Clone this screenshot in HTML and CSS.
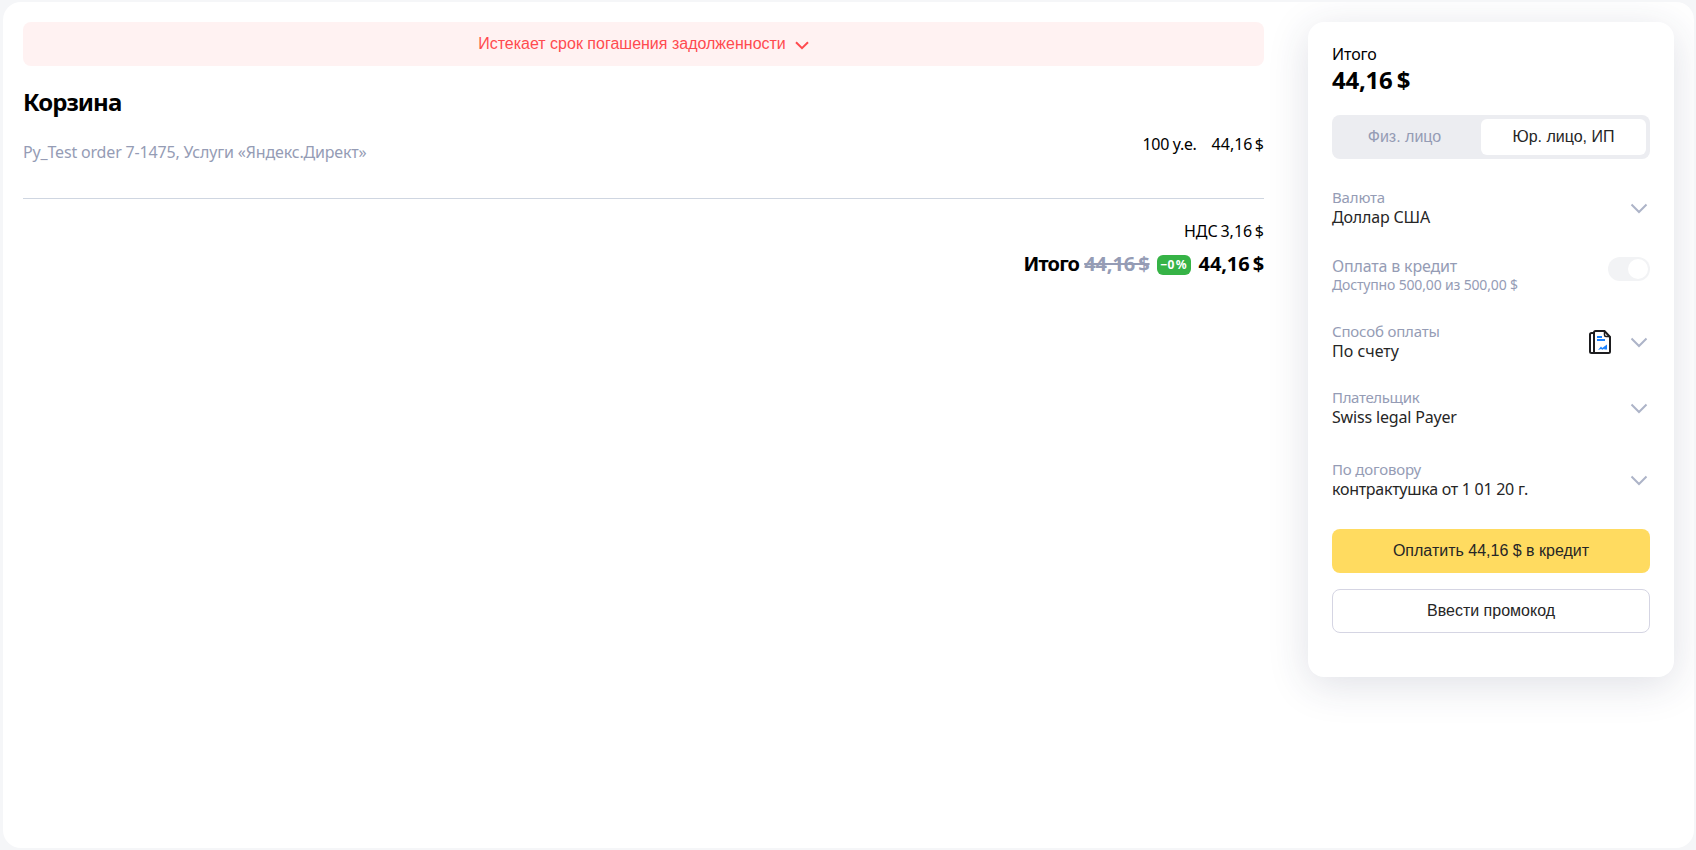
FILE: index.html
```html
<!DOCTYPE html>
<html lang="ru">
<head>
<meta charset="utf-8">
<title>Корзина</title>
<link rel="stylesheet" href="styles.css">
</head>
<body>
<div class="page">
  <main class="cart">
    <button class="alert"><span>Истекает срок погашения задолженности</span><svg width="14" height="9" viewBox="0 0 14 9"><path d="M1 1.2 7 7.2 13 1.2"/></svg></button>
    <h1 class="title">Корзина</h1>
    <div class="order">
      <div class="order-name">Py_Test order 7-1475, Услуги «Яндекс.Директ»</div>
      <div class="order-sum"><span class="quantity">100 у.е.</span><span class="amount">44,16 $</span></div>
    </div>
    <div class="vat">НДС 3,16 $</div>
    <div class="total">
      <span class="total-label">Итого</span><s class="total-price price-old">44,16 $</s><span class="badge">−0 %</span><span class="total-price">44,16 $</span>
    </div>
  </main>
  <aside class="card">
    <div class="card-label">Итого</div>
    <div class="card-sum">44,16 $</div>
    <div class="segmented">
      <div class="segment">Физ. лицо</div>
      <div class="segment segment-active">Юр. лицо, ИП</div>
    </div>
    <div class="field field-currency">
      <div><div class="label">Валюта</div><div class="value">Доллар США</div></div>
      <svg class="chevron" width="18" height="11" viewBox="0 0 18 11"><path d="M1.5 1.5 9 9 16.500 1.5"/></svg>
    </div>
    <div class="field field-credit">
      <div><div class="credit-label">Оплата в кредит</div><div class="credit-note">Доступно 500,00 из 500,00 $</div></div>
      <div class="toggle"><div class="knob"></div></div>
    </div>
    <div class="field field-method">
      <div><div class="label">Способ оплаты</div><div class="value value-short">По счету</div></div>
      <svg class="bill" width="22" height="24" viewBox="0 0 22 24">
        <path class="bill-line" d="M5 3H2.500Q1 3 1 4.500V21.500Q1 23 2.500 23H19.500Q21 23 21 21.500V7L15.500 1H6.500Q5 1 5 2.500V23"/>
        <path class="bill-fold" d="M15.500 1.500V5Q15.500 6.500 17 6.500H20.500"/>
        <path class="bill-text" d="M8 7H13M8 10H16"/>
        <path class="bill-sign" d="M9 20 12 16.500 13.200 18 18 14.500V19.500H15.500L15.200 18.700 13.500 19.800 12 19Z"/>
      </svg>
      <svg class="chevron" width="18" height="11" viewBox="0 0 18 11"><path d="M1.5 1.5 9 9 16.500 1.5"/></svg>
    </div>
    <div class="field field-payer">
      <div><div class="label label-payer">Плательщик</div><div class="value">Swiss legal Payer</div></div>
      <svg class="chevron" width="18" height="11" viewBox="0 0 18 11"><path d="M1.5 1.5 9 9 16.500 1.5"/></svg>
    </div>
    <div class="field field-contract">
      <div><div class="label">По договору</div><div class="value value-contract">контрактушка от 1 01 20 г.</div></div>
      <svg class="chevron" width="18" height="11" viewBox="0 0 18 11"><path d="M1.5 1.5 9 9 16.500 1.5"/></svg>
    </div>
    <button class="btn btn-pay">Оплатить 44,16 $ в кредит</button>
    <button class="btn btn-promo">Ввести промокод</button>
  </aside>
</div>
</body>
</html>
```
FILE: styles.css
```css
* { box-sizing: border-box; }
body { margin: 0; height: 850px; padding: 2px 2px 2px 3px; background: #f5f6f8; font: 16px/20px "Noto Sans", sans-serif; color: #000; overflow: hidden; white-space: nowrap; }
.page { display: flex; align-items: flex-start; justify-content: space-between; height: 846px; padding: 20px 20px 0 20px; border-radius: 18px; background: #fff; overflow: hidden; }
.cart { width: 1241px; }
button { font: 16px/20px "Liberation Sans", Arial, sans-serif; }
.alert { display: flex; align-items: center; justify-content: center; gap: 9px; width: 100%; height: 44px; padding: 0; border: 0; border-radius: 8px; background: #fff2f2; color: #ff4b4f; }
.alert svg { margin-top: 3px; fill: none; stroke: #ff4b4f; stroke-width: 2; }
.title { margin: 22px 0 0; font-size: 24px; line-height: 28px; font-weight: 700; letter-spacing: -.95px; }
.order { display: flex; justify-content: space-between; height: 83px; border-bottom: 1px solid #cfd6e1; }
.order-name { padding-top: 26px; color: #959cb5; letter-spacing: -.17px; }
.order-sum { display: flex; gap: 15px; padding-top: 18px; }
.quantity { letter-spacing: -.3px; }
.amount { word-spacing: -1.8px; }
.vat { margin-top: 22px; text-align: right; word-spacing: -1.5px; }
.total { display: flex; align-items: center; justify-content: flex-end; height: 28px; margin-top: 9px; font-size: 20px; line-height: 28px; font-weight: 700; }
.total-label { letter-spacing: -.85px; }
.total-price { letter-spacing: -.1px; word-spacing: -2px; }
.price-old { margin-left: 5px; color: #959cb5; }
.badge { width: 34px; height: 20px; margin: 2px 8px 0 7px; border-radius: 6px; background: #36b346; color: #fff; font-size: 12px; line-height: 20px; text-align: center; word-spacing: -1.8px; }
.card { width: 366px; height: 655px; padding: 22px 24px 0; border-radius: 16px; background: #fff; box-shadow: 0 8px 40px rgba(40, 50, 90, .15); }
.card-label { letter-spacing: -.1px; }
.card-sum { margin-top: 2px; font-size: 24px; line-height: 28px; font-weight: 700; letter-spacing: -.25px; word-spacing: -1.8px; }
.segmented { display: flex; height: 44px; margin-top: 21px; padding: 4px; border-radius: 8px; background: #ecedf1; font: 16px/36px "Liberation Sans", Arial, sans-serif; text-align: center; }
.segment { width: 145px; padding-right: 8px; color: #959cb5; }
.segment-active { width: 165px; padding: 0; border-radius: 6px; background: #fff; color: #262626; }
.field { display: flex; align-items: center; height: 40px; }
.field > div:first-child { flex: 1; }
.field-currency { margin-top: 28px; }
.field-credit { margin-top: 29px; height: 38px; }
.field-method { margin-top: 27px; }
.field-payer { margin-top: 26px; }
.field-contract { margin-top: 32px; }
.label { font-size: 15px; color: #959cb5; letter-spacing: -.17px; }
.label-payer { letter-spacing: -.35px; }
.value { color: #262626; letter-spacing: -.17px; }
.value-short { letter-spacing: 0; }
.value-contract { letter-spacing: -.27px; }
.credit-label { color: #959cb5; letter-spacing: -.18px; }
.credit-note { font-size: 14px; line-height: 18px; color: #959cb5; letter-spacing: -.16px; }
.chevron { margin: 2px 2px 0 0; fill: none; stroke: #adb4c8; stroke-width: 2; }
.toggle { display: flex; justify-content: flex-end; width: 42px; height: 24px; margin-bottom: 12px; padding: 2px; border-radius: 12px; background: #f2f3f5; }
.knob { width: 20px; height: 20px; border-radius: 50%; background: #fff; }
.bill { margin: 2px 19px 0 0; }
.bill-line, .bill-fold, .bill-text { fill: none; stroke: #1d1d1f; stroke-width: 2; }
.bill-fold { stroke-width: 1.5; }
.bill-text { stroke: #1a82ff; }
.bill-sign { fill: #1a82ff; }
.btn { display: block; width: 100%; height: 44px; padding: 0; border: 0; border-radius: 8px; color: #262626; }
.btn-pay { margin-top: 30px; background: #ffdb60; }
.btn-promo { margin-top: 16px; border: 1px solid #d5d5e3; background: #fff; }
```
